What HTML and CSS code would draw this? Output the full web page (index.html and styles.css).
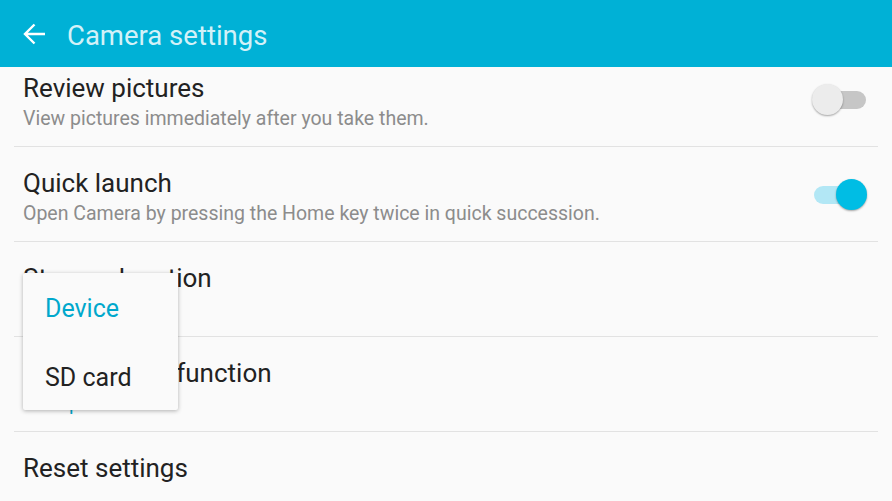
FILE: index.html
```html
<!DOCTYPE html>
<html lang="en">

<head>
    <meta charset="UTF-8">
    <meta name="viewport" content="width=device-width, initial-scale=1.0">
    <title>Camera settings</title>
    <link rel="stylesheet" href="styles.css">
</head>

<body>
    <div class="screen">
        <header class="app-bar">
            <svg class="back" viewBox="0 0 22 22" width="22" height="22">
                <path d="M22 11H2M11.5 1.5L2 11l9.5 9.5" fill="none" stroke="#fff" stroke-width="2.4" />
            </svg>
            <h1>Camera settings</h1>
        </header>

        <main class="content">
            <ul class="settings">
                <li class="row">
                    <div class="text">
                        <div class="title">Review pictures</div>
                        <div class="summary">View pictures immediately after you take them.</div>
                    </div>
                    <span class="switch"><span class="track"></span><span class="thumb"></span></span>
                </li>
                <li class="row">
                    <div class="text">
                        <div class="title">Quick launch</div>
                        <div class="summary">Open Camera by pressing the Home key twice in quick succession.</div>
                    </div>
                    <span class="switch on"><span class="track"></span><span class="thumb"></span></span>
                </li>
                <li class="row">
                    <div class="text">
                        <div class="title">Storage location</div>
                        <div class="summary value">Device</div>
                    </div>
                </li>
                <li class="row">
                    <div class="text">
                        <div class="title">Volume keys function</div>
                        <div class="summary value">Take pictures</div>
                    </div>
                </li>
                <li class="row">
                    <div class="text">
                        <div class="title">Reset settings</div>
                    </div>
                </li>
            </ul>
        </main>

        <!-- popup for storage location -->
        <div class="popup">
            <div class="option selected">Device</div>
            <div class="option">SD card</div>
        </div>
    </div>
</body>

</html>
```

FILE: styles.css
```css
* {
    box-sizing: border-box;
    margin: 0;
    padding: 0;
}

body {
    font-family: Roboto, "Noto Sans", Arial, sans-serif;
    background-color: #fafafa;
}

.screen {
    position: relative;
    width: 892px;
    height: 501px;
    overflow: hidden;
}

.app-bar {
    height: 67px;
    background-color: #00b1d6;
    display: flex;
    align-items: center;
    padding: 3px 0 0 23px;
}

.back {
    width: 22px;
    height: 22px;
    margin-top: -3px;
}

.app-bar h1 {
    margin-left: 22px;
    font-size: 27.5px;
    font-weight: 400;
    color: #d3f1f8;
}

.content {
    height: 434px;
    overflow: hidden;
}

.settings {
    list-style: none;
    margin: -15px 14px 0;
}

.row {
    height: 95px;
    border-bottom: 1px solid #e2e2e2;
    display: flex;
    align-items: flex-start;
    padding: 21px 12px 0 9px;
}

.text {
    flex: 1;
}

.title {
    font-size: 26px;
    line-height: 30px;
    color: #222;
}

.summary {
    margin-top: 5px;
    font-size: 19.5px;
    line-height: 22px;
    color: #8c8c8c;
}

.summary.value {
    color: #00a8cc;
}

.switch {
    position: relative;
    width: 54px;
    height: 32px;
    margin-top: 11px;
}

.track {
    position: absolute;
    left: 2px;
    right: 0;
    top: 7px;
    height: 18px;
    border-radius: 9px;
    background-color: #c6c6c6;
}

.thumb {
    position: absolute;
    left: 0;
    top: 0;
    width: 31px;
    height: 31px;
    border-radius: 50%;
    background-color: #ececec;
    box-shadow: 0 1px 2px rgba(0, 0, 0, 0.35);
}

.switch.on .track {
    background-color: #b2e7f5;
}

.switch.on .thumb {
    left: auto;
    right: -1px;
    background-color: #00bde4;
}

.popup {
    position: absolute;
    left: 23px;
    top: 273px;
    width: 155px;
    height: 137px;
    background-color: #fafafa;
    border-radius: 2px;
    box-shadow: 0 1px 4px rgba(0, 0, 0, 0.3);
    padding-top: 19px;
}

.option {
    height: 69px;
    padding-left: 22px;
    font-size: 25px;
    line-height: 34px;
    color: #222;
}

.option.selected {
    color: #00a8cc;
}
```
